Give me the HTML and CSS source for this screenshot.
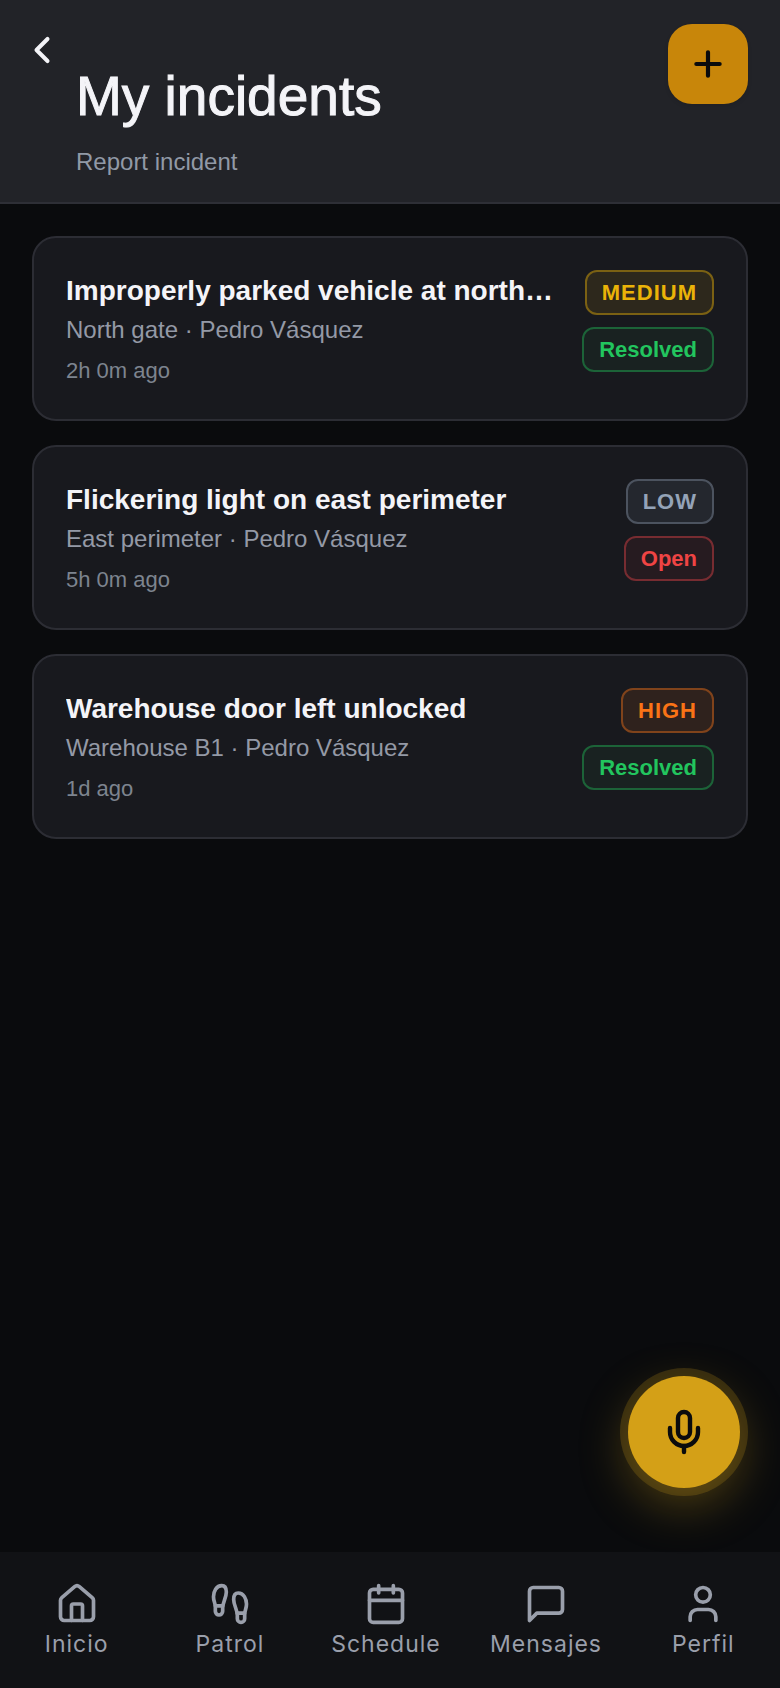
FILE: index.html
```html
<!DOCTYPE html>
<html lang="en">

<head>
    <meta charset="UTF-8">
    <meta name="viewport" content="width=device-width, initial-scale=1.0">
    <title>My incidents</title>
    <link rel="stylesheet" href="styles.css">
</head>

<body>
    <header class="header">
        <button class="back" type="button" aria-label="Back">
            <svg class="icon" viewBox="0 0 24 24"><path d="m15 18-6-6 6-6"/></svg>
        </button>
        <div class="heading">
            <h1>My incidents</h1>
            <p>Report incident</p>
        </div>
        <button class="add" type="button" aria-label="Add incident">
            <svg class="icon" viewBox="0 0 24 24"><path d="M5 12h14M12 5v14"/></svg>
        </button>
    </header>

    <main class="incidents">
        <article class="card">
            <div class="info">
                <h2>Improperly parked vehicle at north gate</h2>
                <p class="place">North gate · Pedro Vásquez</p>
                <p class="time">2h 0m ago</p>
            </div>
            <div class="badges">
                <span class="badge level medium">MEDIUM</span>
                <span class="badge resolved">Resolved</span>
            </div>
        </article>

        <article class="card">
            <div class="info">
                <h2>Flickering light on east perimeter</h2>
                <p class="place">East perimeter · Pedro Vásquez</p>
                <p class="time">5h 0m ago</p>
            </div>
            <div class="badges">
                <span class="badge level low">LOW</span>
                <span class="badge open">Open</span>
            </div>
        </article>

        <article class="card">
            <div class="info">
                <h2>Warehouse door left unlocked</h2>
                <p class="place">Warehouse B1 · Pedro Vásquez</p>
                <p class="time">1d ago</p>
            </div>
            <div class="badges">
                <span class="badge level high">HIGH</span>
                <span class="badge resolved">Resolved</span>
            </div>
        </article>
    </main>

    <button class="mic" type="button" aria-label="Voice">
        <svg class="icon" viewBox="0 0 24 24">
            <path d="M12 19v3"/>
            <path d="M19 10v2a7 7 0 0 1-14 0v-2"/>
            <rect x="9" y="2" width="6" height="13" rx="3"/>
        </svg>
    </button>

    <nav class="tabs">
        <a class="tab" href="#">
            <svg class="icon" viewBox="0 0 24 24">
                <path d="M15 21v-8a1 1 0 0 0-1-1h-4a1 1 0 0 0-1 1v8"/>
                <path d="M3 10a2 2 0 0 1 .709-1.528l7-5.999a2 2 0 0 1 2.582 0l7 5.999A2 2 0 0 1 21 10v9a2 2 0 0 1-2 2H5a2 2 0 0 1-2-2z"/>
            </svg>
            <span>Inicio</span>
        </a>
        <a class="tab" href="#">
            <svg class="icon" viewBox="0 0 24 24">
                <path d="M4 16v-2.38C4 11.5 2.97 10.5 3 8c.03-2.72 1.49-6 4.5-6C9.37 2 10 3.8 10 5.5c0 3.11-2 5.66-2 8.68V16a2 2 0 1 1-4 0Z"/>
                <path d="M20 20v-2.38c0-2.12 1.03-3.12 1-5.62-.03-2.72-1.49-6-4.5-6C14.63 6 14 7.8 14 9.5c0 3.11 2 5.66 2 8.68V20a2 2 0 1 0 4 0Z"/>
                <path d="M16 17h4M4 13h4"/>
            </svg>
            <span>Patrol</span>
        </a>
        <a class="tab" href="#">
            <svg class="icon" viewBox="0 0 24 24">
                <path d="M8 2v4M16 2v4M3 10h18"/>
                <rect x="3" y="4" width="18" height="18" rx="2"/>
            </svg>
            <span>Schedule</span>
        </a>
        <a class="tab" href="#">
            <svg class="icon" viewBox="0 0 24 24">
                <path d="M21 15a2 2 0 0 1-2 2H7l-4 4V5a2 2 0 0 1 2-2h14a2 2 0 0 1 2 2z"/>
            </svg>
            <span>Mensajes</span>
        </a>
        <a class="tab" href="#">
            <svg class="icon" viewBox="0 0 24 24">
                <path d="M19 21v-2a4 4 0 0 0-4-4H9a4 4 0 0 0-4 4v2"/>
                <circle cx="12" cy="7" r="4"/>
            </svg>
            <span>Perfil</span>
        </a>
    </nav>
</body>

</html>
```

FILE: styles.css
```css
* {
    margin: 0;
    padding: 0;
    box-sizing: border-box;
}

body {
    font-family: "Liberation Sans", Arial, sans-serif;
    background: #0a0b0d;
    color: #f4f4f8;
    display: flex;
    flex-direction: column;
    min-height: 100vh;
}

button {
    border: none;
    background: none;
    color: inherit;
    cursor: pointer;
    display: flex;
    justify-content: center;
    align-items: center;
}

.icon {
    width: 44px;
    height: 44px;
    fill: none;
    stroke: currentColor;
    stroke-width: 2;
    stroke-linecap: round;
    stroke-linejoin: round;
}

/* Header */
.header {
    display: flex;
    align-items: flex-start;
    gap: 12px;
    padding: 24px 32px 22px 20px;
    background: #222328;
    border-bottom: 2px solid #2e2f36;
}

.back {
    padding-top: 4px;
}

.back .icon {
    stroke-width: 2.2;
}

.heading {
    flex: 1;
    padding-top: 36px;
}

.heading h1 {
    font-size: 55px;
    font-weight: 400;
    line-height: 72px;
    /* medium weight */
    -webkit-text-stroke: 1px currentColor;
}

.heading p {
    margin-top: 12px;
    font-size: 24px;
    line-height: 36px;
    color: #9199a6;
}

.add {
    width: 80px;
    height: 80px;
    border-radius: 24px;
    background: #c8860a;
    color: #0a0b0d;
    box-shadow: 0 2px 4px rgba(0, 0, 0, 0.1);
}

.add .icon {
    width: 40px;
    height: 40px;
    stroke-width: 2.5;
}

/* Incident list */
.incidents {
    flex: 1;
    display: flex;
    flex-direction: column;
    gap: 24px;
    padding: 32px;
}

.card {
    display: flex;
    align-items: flex-start;
    gap: 24px;
    padding: 32px;
    background: #18191e;
    border: 2px solid #2c2d34;
    border-radius: 24px;
}

.info {
    flex: 1;
    min-width: 0;
}

.info h2 {
    font-size: 28px;
    line-height: 42px;
    white-space: nowrap;
    overflow: hidden;
    text-overflow: ellipsis;
}

.place {
    font-size: 24px;
    line-height: 36px;
    color: #9499a6;
}

.time {
    margin-top: 6px;
    font-size: 22px;
    line-height: 33px;
    color: #7d848f;
}

.badges {
    display: flex;
    flex-direction: column;
    align-items: flex-end;
    gap: 12px;
}

.badge {
    padding: 4px 15px;
    border: 2px solid;
    border-radius: 12px;
    font-size: 22px;
    font-weight: 700;
    line-height: 33px;
}

.level {
    letter-spacing: 1px;
}

.medium {
    color: #eab308;
    background: #2d281c;
    border-color: #7b6113;
}

.low {
    color: #94a3b8;
    background: #24272e;
    border-color: #4c535f;
}

.high {
    color: #f97316;
    background: #2f221d;
    border-color: #80431b;
}

.resolved {
    color: #22c55e;
    background: #192221;
    border-color: #1c6338;
}

.open {
    color: #ef4444;
    background: #261b20;
    border-color: #772c31;
}

/* Voice button */
.mic {
    position: fixed;
    right: 40px;
    bottom: 200px;
    width: 112px;
    height: 112px;
    border-radius: 50%;
    background: #d4a017;
    color: #0a0b0d;
    box-shadow: 0 0 0 8px rgba(212, 160, 23, 0.2), 0 16px 48px rgba(212, 160, 23, 0.35);
}

.mic .icon {
    width: 48px;
    height: 48px;
    stroke-width: 2.2;
}

/* Bottom tabs */
.tabs {
    display: flex;
    justify-content: space-around;
    padding: 30px 0 26px;
    background: #111215;
}

.tab {
    display: flex;
    flex-direction: column;
    align-items: center;
    min-width: 128px;
    padding: 0 12px;
    font-family: Inter, sans-serif;
    font-size: 23px;
    line-height: 36px;
    letter-spacing: 1px;
    text-decoration: none;
    color: #9a9fab;
}
```
